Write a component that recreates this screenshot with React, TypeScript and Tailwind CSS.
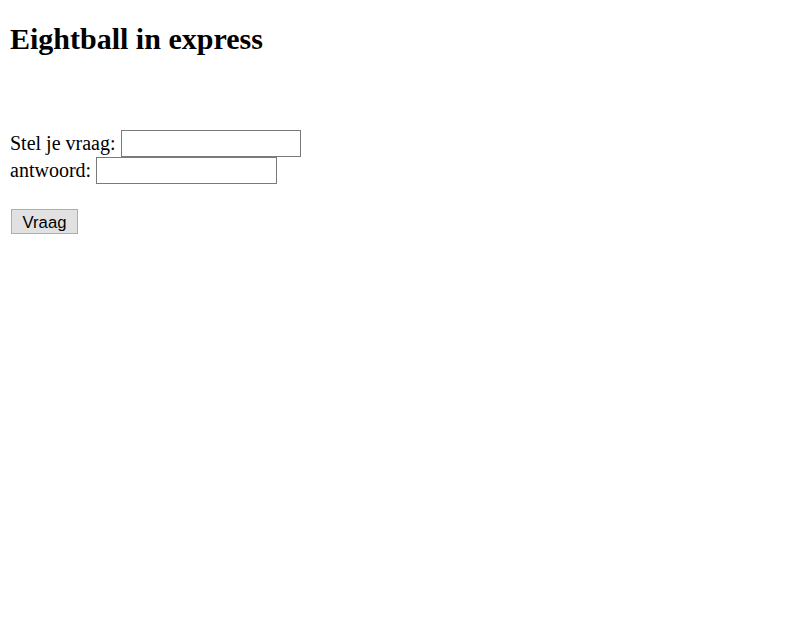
import React from 'react';

export default function App() {
  const [vraag, setVraag] = React.useState('');
  const [antwoord, setAntwoord] = React.useState('');

  return (
    <div className="min-h-screen bg-white px-[10px] text-black" style={{ fontFamily: '"Liberation Serif", "Times New Roman", serif' }}>
      <h1 className="mt-[22px] mb-0 text-[30px] font-bold leading-[34px]">Eightball in express</h1>

      {/* form */}
      <form className="pt-[74px] text-[20px] leading-[23px]" onSubmit={(e) => e.preventDefault()}>
        <div className="flex h-[27px] items-center">
          <span>Stel je vraag:</span>
          <input
            value={vraag}
            onChange={(e) => setVraag(e.target.value)}
            className="ml-[5px] h-[27px] w-[180px] border border-[#7a7a7a] bg-white px-1 text-[16px] outline-none"
          />
        </div>
        <div className="flex h-[27px] items-center">
          <span>antwoord:</span>
          <input
            value={antwoord}
            onChange={(e) => setAntwoord(e.target.value)}
            className="ml-[5px] h-[27px] w-[181px] border border-[#7a7a7a] bg-white px-1 text-[16px] outline-none"
          />
        </div>
        <button
          type="submit"
          className="mt-[25px] ml-[1px] flex h-[25px] w-[67px] items-center justify-center border border-[#adadad] bg-[#e1e1e1] pt-[2px] text-[16.67px] leading-[19px] text-black"
          style={{ fontFamily: '"Liberation Sans", Arial, sans-serif' }}
        >
          Vraag
        </button>
      </form>
    </div>
  );
}
